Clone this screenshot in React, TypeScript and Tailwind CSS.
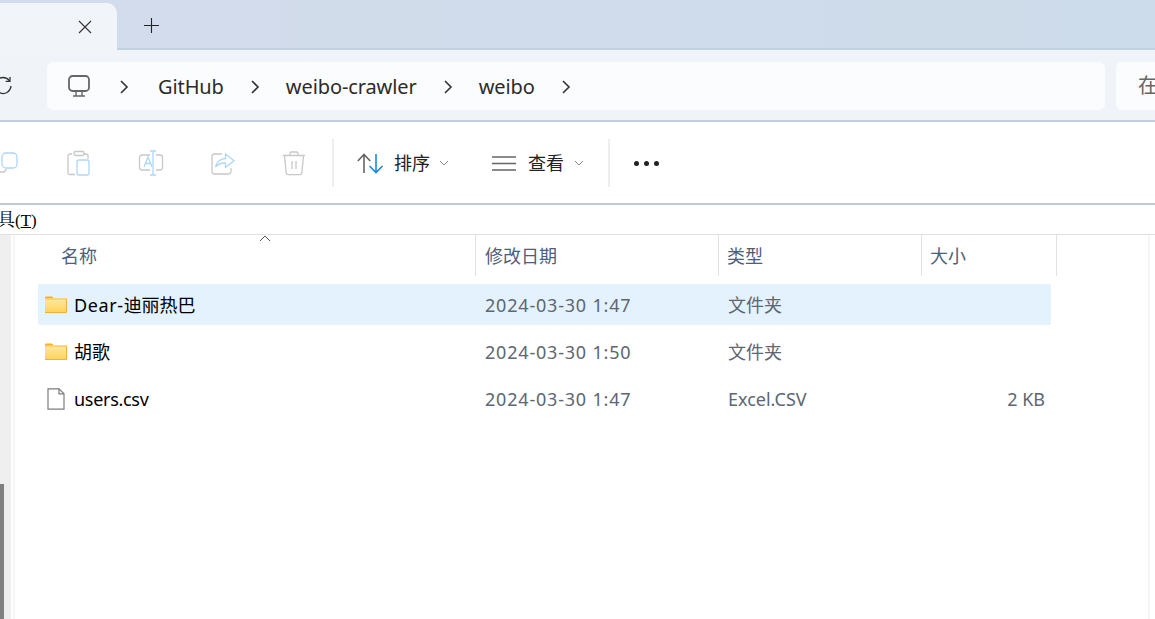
const FONT = "font-['Noto_Sans','Noto_Sans_CJK_SC',sans-serif]";

function Chevron() {
  return (
    <svg width="10" height="14" viewBox="0 0 10 14" fill="none" stroke="#333" strokeWidth="1.6" className="shrink-0">
      <path d="M2 1l6 6-6 6" />
    </svg>
  );
}

function Crumb({ label }: { label: string }) {
  return (
    <>
      <span className="text-[20px] leading-[28px] tracking-[-0.1px] text-[#2b2b2b]">{label}</span>
      <Chevron />
    </>
  );
}

function Folder() {
  return (
    <svg width="22" height="17" viewBox="0 0 22 17" className="shrink-0">
      <defs>
        <linearGradient id="fg" x1="0" y1="0" x2="0" y2="1">
          <stop offset="0" stopColor="#ffe99f" />
          <stop offset="1" stopColor="#ffd258" />
        </linearGradient>
      </defs>
      <path d="M0 1.500a1 1 0 0 1 1-1h6l2 2h-9z" fill="#f5b21c" />
      <rect x="0" y="2.500" width="22" height="14.500" rx="0.500" fill="url(#fg)" />
      <path d="M21.500 3v13.500H0" fill="none" stroke="#eeb23c" strokeWidth="1" />
      <path d="M0 3h22" stroke="#f5c043" strokeWidth="1" />
    </svg>
  );
}

function FileIcon() {
  return (
    <svg width="18" height="22" viewBox="0 0 18 22" fill="none" stroke="#7d7d7d" strokeWidth="1.200" className="shrink-0">
      <path d="M1 .8h11l5 5v15.400H1z" fill="#fff" />
      <path d="M12 .8v5h5" />
    </svg>
  );
}

function Row({ icon, name, nameClass, date, type, size, selected }: { icon: React.ReactNode; name: React.ReactNode; nameClass?: string; date: string; type: string; size?: string; selected?: boolean }) {
  return (
    <div className={`flex h-[41px] items-center rounded-[2px] ${selected ? "bg-[#e4f2fd]" : ""}`}>
      <div className="flex w-[36px] justify-center">{icon}</div>
      <span className={`w-[411px] text-[18px] leading-[24px] text-black ${nameClass ?? ""}`}>{name}</span>
      <span className="w-[243px] text-[18px] leading-[24px] tracking-[0.8px] text-[#5d6671]">{date}</span>
      <span className="w-[190px] text-[18px] leading-[24px] text-[#5d6671]">{type}</span>
      <span className="w-[127px] text-right text-[18px] leading-[24px] text-[#5d6671]">{size}</span>
    </div>
  );
}

function HeaderCell({ label, className }: { label: string; className: string }) {
  return (
    <div className={`relative flex h-[41px] items-center border-r border-[#e3e3e3] text-[18px] leading-[24px] text-[#4c607a] ${className}`}>
      {label}
    </div>
  );
}

function Sep() {
  return <div className="h-[48px] w-[2px] bg-[#eeeeee]" />;
}

function Ghost({ children }: { children: React.ReactNode }) {
  return (
    <svg width="26" height="26" viewBox="0 0 26 26" fill="none" strokeWidth="1.300" className="shrink-0">
      {children}
    </svg>
  );
}

const G = "#c8c8c8";
const B = "#aed6f5";

export default function App() {
  return (
    <div className={`flex h-[619px] w-[1155px] flex-col overflow-hidden bg-white ${FONT}`}>
      {/* Title bar */}
      <div className="flex h-[50px] shrink-0 items-end border-b-2 border-[#c2d0e0] bg-gradient-to-r from-[#d3dcec] to-[#cddcea]">
        <div className="-mb-[2px] flex h-[47px] w-[117px] items-center justify-end rounded-tr-[10px] bg-[#f1f4f9] pr-[25px]">
          <svg width="14" height="14" viewBox="0 0 14 14" stroke="#333" strokeWidth="1.100">
            <path d="M1 1l12 12M13 1L1 13" />
          </svg>
        </div>
        <div className="ml-[27px] flex h-[47px] items-center pt-[1px]">
          <svg width="15" height="15" viewBox="0 0 15 15" stroke="#222" strokeWidth="1.100">
            <path d="M7.500 0v15M0 7.500h15" />
          </svg>
        </div>
      </div>

      {/* Address row */}
      <div className="flex h-[72px] shrink-0 items-center border-b-2 border-[#c3cddc] bg-[#f0f4f9] pt-[2px]">
        <div className="flex w-[47px] shrink-0 justify-end pr-[34px]">
          <div className="w-[13px] overflow-hidden">
            <svg width="20" height="20" viewBox="0 0 20 20" fill="none" stroke="#333" strokeWidth="1.300" className="-ml-[7px]">
              <path d="M16.500 4.800A8 8 0 1 0 18 10" />
              <path d="M17 1v4.300h-4.300" />
            </svg>
          </div>
        </div>
        <div className="flex h-[48px] w-[1058px] shrink-0 items-center rounded-[6px] bg-[#fbfcfe] pl-[21px]">
          <svg width="22" height="22" viewBox="0 0 22 22" fill="none" stroke="#666" strokeWidth="1.800" className="mr-[29px] shrink-0">
            <rect x="1" y="1" width="20" height="15" rx="3.500" />
            <path d="M8 16.500v4M14 16.500v4M5 21h12" strokeWidth="1.400" />
          </svg>
          <div className="mt-[2px]"><Chevron /></div>
          <div className="ml-[29px] mt-[2px] flex items-center gap-[26px]">
            <Crumb label="GitHub" />
            <Crumb label="weibo-crawler" />
            <Crumb label="weibo" />
          </div>
        </div>
        <div className="ml-[11px] flex h-[48px] grow items-center rounded-l-[6px] bg-[#fbfcfe] pl-[22px] text-[20px] text-[#666666]">
          在
        </div>
      </div>

      {/* Toolbar */}
      <div className="flex h-[83px] shrink-0 items-center border-b-2 border-[#c1cadb] bg-white pt-[1px]">
        <div className="ml-[-6px] flex items-center gap-[46px]">
          <Ghost>
            <rect x="8" y="3" width="15" height="15" rx="4" stroke={B} />
            <path d="M5 9H4a3 3 0 0 0-3 3v7a3 3 0 0 0 3 3h5a3 3 0 0 0 3-3" stroke={G} />
          </Ghost>
          <Ghost>
            <path d="M6 4H4a2 2 0 0 0-2 2v17a1.500 1.500 0 0 0 1.500 1.500H9" stroke={G} />
            <path d="M18 4h2a2 2 0 0 1 2 2v3" stroke={G} />
            <rect x="8" y="1.500" width="10" height="4" rx="1.500" stroke={G} />
            <rect x="11" y="10" width="12" height="15" rx="2" stroke={B} />
          </Ghost>
          <Ghost>
            <path d="M12 5H4a2.500 2.500 0 0 0-2.500 2.500v10A2.500 2.500 0 0 0 4 20h8M18 5h4a2.500 2.500 0 0 1 2.500 2.500v10A2.500 2.500 0 0 1 22 20h-4" stroke={G} />
            <path d="M15 1v24M12 1h6M12 25h6" stroke={B} />
            <path d="M6 17l4-10 4 10M7.500 13.500h5" stroke={B} />
          </Ghost>
          <Ghost>
            <path d="M12 4H4.500A2.500 2.500 0 0 0 2 6.500v15A2.500 2.500 0 0 0 4.500 24h14a2.500 2.500 0 0 0 2.500-2.500V18" stroke={G} />
            <path d="M5.500 17c1-5 5-8.500 10-8.500V4l8.500 6.800-8.500 6.500v-4.300c-4-.2-7.500 1-10 4z" stroke={B} />
          </Ghost>
          <Ghost>
            <path d="M1 5.500h22M8 5V3.500A1.500 1.500 0 0 1 9.500 2h5A1.500 1.500 0 0 1 16 3.500V5M2.500 6l1.700 17a2 2 0 0 0 2 1.700h11.600a2 2 0 0 0 2-1.700L21.500 6" stroke={G} />
            <path d="M10 11v8M14 11v8" stroke={G} />
          </Ghost>
        </div>
        <div className="ml-[24px]"><Sep /></div>
        <div className="ml-[23px] flex items-center">
          <svg width="27" height="21" viewBox="0 0 27 21" fill="none" strokeWidth="1.600">
            <path d="M7 20V1.500M.8 8 7 1.500 13.200 8" stroke="#666" />
            <path d="M19 1v18.500M12.500 13 19 19.500 25.500 13" stroke="#1a8ae0" />
          </svg>
          <span className="ml-[10px] text-[18px] leading-[24px] text-[#222]">排序</span>
          <svg width="10" height="6" viewBox="0 0 10 6" fill="none" stroke="#888" className="ml-[9px]">
            <path d="M1 1l4 4 4-4" />
          </svg>
        </div>
        <div className="ml-[43px] flex items-center">
          <svg width="24" height="15" viewBox="0 0 24 15" fill="none" stroke="#666" strokeWidth="1.500">
            <path d="M0 1h24M0 7.500h24M0 14h24" />
          </svg>
          <span className="ml-[12px] text-[18px] leading-[24px] text-[#222]">查看</span>
          <svg width="10" height="6" viewBox="0 0 10 6" fill="none" stroke="#888" className="ml-[10px]">
            <path d="M1 1l4 4 4-4" />
          </svg>
        </div>
        <div className="ml-[24px]"><Sep /></div>
        <div className="ml-[24px] flex gap-[5px]">
          <span className="h-[5px] w-[5px] rounded-full bg-[#222]" />
          <span className="h-[5px] w-[5px] rounded-full bg-[#222]" />
          <span className="h-[5px] w-[5px] rounded-full bg-[#222]" />
        </div>
      </div>

      {/* Menu bar */}
      <div className="flex h-[30px] shrink-0 items-center overflow-hidden border-b border-[#e0e0e0] bg-white pt-[1px] font-['Liberation_Serif','Noto_Serif_CJK_SC','Noto_Sans_CJK_SC',serif]">
        <span className="ml-[-3px] text-[18px] leading-[24px] text-black">具<span className="text-[17px]">(<span className="underline">T</span>)</span></span>
      </div>

      {/* Content */}
      <div className="flex min-h-0 grow">
        <div className="flex w-[11px] shrink-0 flex-col bg-[#efefef]">
          <div className="h-[249px]" />
          <div className="w-[4px] grow bg-[#808080]" />
        </div>
        <div className="w-[2px] shrink-0 bg-white" />
        <div className="w-[2px] shrink-0 bg-[#f5f5f5]" />
        <div className="min-w-0 grow pl-[23px]">
          <div className="relative flex">
            <HeaderCell label="名称" className="w-[438px] pl-[23px]" />
            <HeaderCell label="修改日期" className="w-[243px] pl-[9px]" />
            <HeaderCell label="类型" className="w-[203px] pl-[8px]" />
            <HeaderCell label="大小" className="w-[135px] pl-[8px]" />
            <svg width="12" height="7" viewBox="0 0 12 7" fill="none" stroke="#555" className="absolute left-[221px] top-0">
              <path d="M1 6l5-5 5 5" />
            </svg>
          </div>
          <div className="mt-[8px] w-[1013px]">
            <Row icon={<Folder />} name={<><span className="tracking-[0.6px]">Dear-</span>迪丽热巴</>} date="2024-03-30 1:47" type="文件夹" selected />
            <div className="h-[6px]" />
            <Row icon={<Folder />} name="胡歌" date="2024-03-30 1:50" type="文件夹" />
            <div className="h-[6px]" />
            <Row icon={<FileIcon />} name="users.csv" nameClass="tracking-[-0.3px]" date="2024-03-30 1:47" type="Excel.CSV" size="2 KB" />
          </div>
        </div>
        <div className="w-[2px] shrink-0 bg-[#f5f5f5]" />
        <div className="w-[5px] shrink-0 bg-white" />
      </div>
    </div>
  );
}
